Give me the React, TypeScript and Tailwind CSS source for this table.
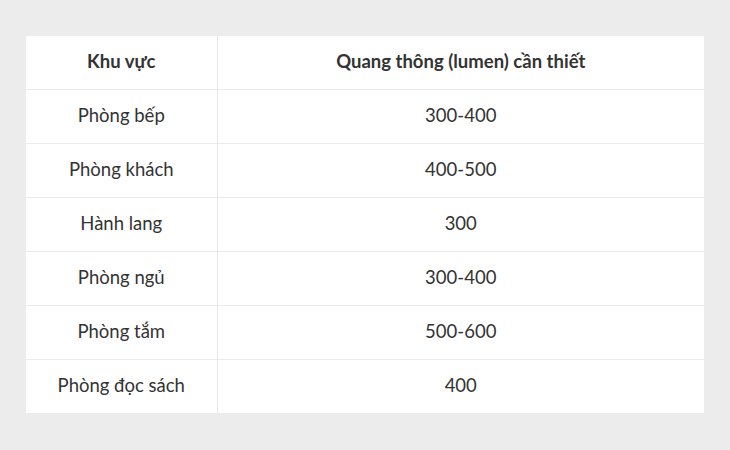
const rows: [string, string][] = [
  ['Phòng bếp', '300-400'],
  ['Phòng khách', '400-500'],
  ['Hành lang', '300'],
  ['Phòng ngủ', '300-400'],
  ['Phòng tắm', '500-600'],
  ['Phòng đọc sách', '400'],
];

export default function App() {
  return (
    <div className="w-[730px] h-[450px] bg-[#ececec] pt-[36px] pl-[26px] font-['Lato','Open_Sans',sans-serif] text-[#333333]">
      <table className="w-[678px] bg-white border-collapse text-[18.5px]">
        <thead>
          <tr className="h-[53px]">
            <th className="w-[191px] font-bold text-center border-r border-[#e6e6e6]">Khu vực</th>
            <th className="font-bold text-center">Quang thông (lumen) cần thiết</th>
          </tr>
        </thead>
        <tbody>
          {rows.map(([area, lumen]) => (
            <tr key={area} className="h-[54px] border-t border-[#ebebeb]">
              <td className="text-center border-r border-[#e6e6e6]">{area}</td>
              <td className="text-center">{lumen}</td>
            </tr>
          ))}
        </tbody>
      </table>
    </div>
  );
}
